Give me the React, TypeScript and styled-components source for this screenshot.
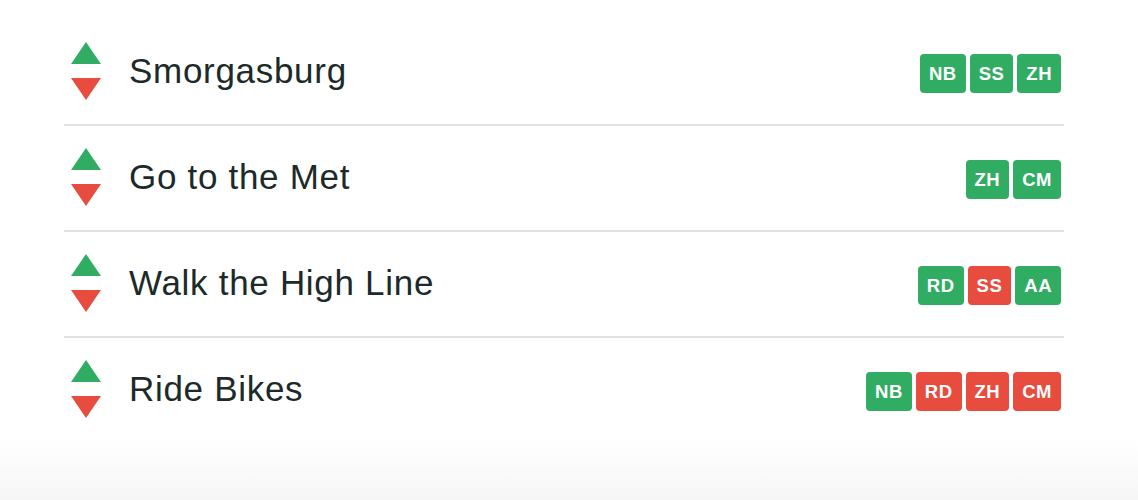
import styled, { createGlobalStyle } from 'styled-components';

type Vote = 'up' | 'down';

interface Item {
  title: string;
  votes: { who: string; vote: Vote }[];
}

const items: Item[] = [
  {
    title: 'Smorgasburg',
    votes: [
      { who: 'NB', vote: 'up' },
      { who: 'SS', vote: 'up' },
      { who: 'ZH', vote: 'up' },
    ],
  },
  {
    title: 'Go to the Met',
    votes: [
      { who: 'ZH', vote: 'up' },
      { who: 'CM', vote: 'up' },
    ],
  },
  {
    title: 'Walk the High Line',
    votes: [
      { who: 'RD', vote: 'up' },
      { who: 'SS', vote: 'down' },
      { who: 'AA', vote: 'up' },
    ],
  },
  {
    title: 'Ride Bikes',
    votes: [
      { who: 'NB', vote: 'up' },
      { who: 'RD', vote: 'down' },
      { who: 'ZH', vote: 'down' },
      { who: 'CM', vote: 'down' },
    ],
  },
];

const GREEN = '#31ad63';
const RED = '#e74c3f';

const GlobalStyle = createGlobalStyle`
  html, body {
    margin: 0;
    padding: 0;
  }
  body {
    min-height: 500px;
    font-family: 'Liberation Sans', Arial, sans-serif;
    background: linear-gradient(to bottom, #fff 0, #fff 440px, #f6f6f6 500px);
  }
`;

const Page = styled.div`
  padding: 20px 74px 0 64px;
`;

const List = styled.ul`
  list-style: none;
  margin: 0;
  padding: 0;
  width: 1000px;
`;

const Row = styled.li`
  display: flex;
  align-items: center;
  height: 104px;
  border-bottom: 2px solid #e1e1e1;

  &:last-child {
    border-bottom: none;
  }
`;

const Voter = styled.div`
  display: flex;
  flex-direction: column;
  gap: 14px;
  margin: -2px 0 0 7px;
`;

const Arrow = styled.button<{ $dir: Vote }>`
  width: 0;
  height: 0;
  padding: 0;
  background: none;
  cursor: pointer;
  border-left: 15px solid transparent;
  border-right: 15px solid transparent;
  border-top: ${(p) => (p.$dir === 'down' ? `22px solid ${RED}` : 'none')};
  border-bottom: ${(p) => (p.$dir === 'up' ? `22px solid ${GREEN}` : 'none')};
`;

const Title = styled.span`
  flex: 1;
  margin: -3px 0 0 28px;
  font-size: 35px;
  letter-spacing: 0.7px;
  color: #1c2a2a;
`;

const Badges = styled.div`
  display: flex;
  gap: 4px;
  margin: 3px 3px 0 0;
`;

const Badge = styled.span<{ $vote: Vote }>`
  height: 39px;
  line-height: 39px;
  padding: 0 9px;
  border-radius: 4px;
  background: ${(p) => (p.$vote === 'up' ? GREEN : RED)};
  color: #fff;
  font-size: 18.5px;
  font-weight: bold;
  letter-spacing: 0.5px;
`;

const App = () => {
  return (
    <>
      <GlobalStyle />
      <Page>
        <List>
          {items.map((item) => (
            <Row key={item.title}>
              <Voter>
                <Arrow $dir='up' aria-label='upvote' />
                <Arrow $dir='down' aria-label='downvote' />
              </Voter>
              <Title>{item.title}</Title>
              <Badges>
                {item.votes.map((v) => (
                  <Badge key={v.who} $vote={v.vote}>
                    {v.who}
                  </Badge>
                ))}
              </Badges>
            </Row>
          ))}
        </List>
      </Page>
    </>
  );
};

export default App;
